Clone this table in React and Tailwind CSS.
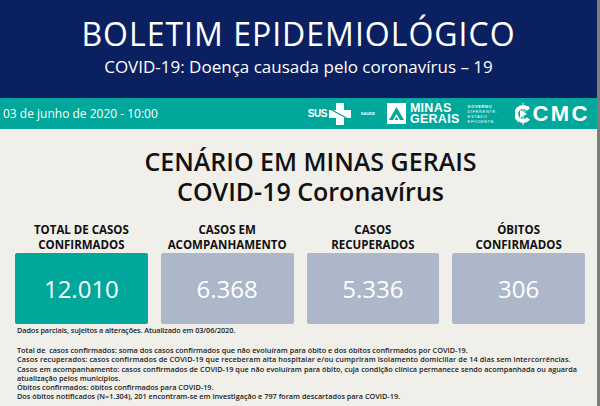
const stats = [
  { label: ["TOTAL DE CASOS", "CONFIRMADOS"], value: "12.010", color: "bg-[#00a79a]" },
  { label: ["CASOS EM", "ACOMPANHAMENTO"], value: "6.368", color: "bg-[#adb7ca]" },
  { label: ["CASOS", "RECUPERADOS"], value: "5.336", color: "bg-[#adb7ca]" },
  { label: ["ÓBITOS", "CONFIRMADOS"], value: "306", color: "bg-[#adb7ca]" },
];

function SusLogo() {
  return (
    <div className="flex items-center gap-[2px]">
      <span className="text-[10px] font-bold tracking-tighter text-white font-['Liberation_Sans',sans-serif]">SUS</span>
      <svg width="22" height="22" viewBox="0 0 22 22">
        <path d="M7 0h8v7h7v8h-7v7H7v-7H0V7h7z" fill="#fff" />
        <path d="M1 6l20 11" stroke="#00a79a" strokeWidth="1.4" />
      </svg>
    </div>
  );
}

function MinasLogo() {
  return (
    <div className="flex items-center">
      <span className="text-[4px] font-bold text-white ml-[10px] mr-[12px] font-['Liberation_Sans',sans-serif]">SAÚDE</span>
      <svg width="19" height="21" viewBox="0 0 19 21">
        <rect width="19" height="21" fill="#fff" />
        <path d="M2 17L9.5 4 17 17z" fill="#00a79a" />
        <path d="M6 17l3.5-6 3.5 6z" fill="#fff" />
        <path d="M7.5 17l2-3.2 2 3.2z" fill="#00a79a" />
      </svg>
      <div className="ml-[4px] flex flex-col leading-[11px] text-white font-bold text-[12.5px] font-['Liberation_Sans',sans-serif] tracking-[0.3px]">
        <span>MINAS</span>
        <span>GERAIS</span>
      </div>
      <div className="ml-[8px] flex flex-col text-[4px] leading-[5px] text-white tracking-[0.6px] font-['Liberation_Sans',sans-serif]">
        <span className="font-bold">GOVERNO</span>
        <span>DIFERENTE.</span>
        <span>ESTADO</span>
        <span>EFICIENTE.</span>
      </div>
    </div>
  );
}

function CmcLogo() {
  return (
    <div className="flex items-center">
      <svg width="16" height="24" viewBox="0 0 16 24">
        <path d="M8 1v22" stroke="#fff" strokeWidth="1" />
        <path d="M13.5 7.5A7 7 0 1 0 13.5 16.5" fill="none" stroke="#fff" strokeWidth="4" />
        <path d="M5 8l7 4-7 4z" fill="#fff" />
        <path d="M2 20L14 4" stroke="#fff" strokeWidth="0.8" />
      </svg>
      <span className="ml-[1px] text-[22px] leading-none font-bold text-white font-['Liberation_Sans',sans-serif] tracking-[2.5px]">CMC</span>
    </div>
  );
}

export default function App() {
  return (
    <div className="w-[600px] h-[406px] overflow-hidden flex flex-col bg-[#f0efea] font-['Open_Sans',sans-serif] border-r-[3px] border-[#7d7d7a]">
      <div className="shrink-0 h-[98px] bg-[#0b2060] flex flex-col items-center text-white">
        <h1 className="mt-[13px] text-[32px] leading-[42px] tracking-[1px]">BOLETIM EPIDEMIOLÓGICO</h1>
        <p className="mt-[1px] text-[17px] leading-[22px]">COVID-19: Doença causada pelo coronavírus – 19</p>
      </div>
      <div className="shrink-0 h-[31px] bg-[#00a79a] flex items-center text-white pl-[3px] pr-[7px]">
        <span className="text-[12px]">03 de junho de 2020 - 10:00</span>
        <div className="ml-auto flex items-center">
          <SusLogo />
          <MinasLogo />
          <div className="ml-[18px]">
            <CmcLogo />
          </div>
        </div>
      </div>
      <div className="shrink-0 flex flex-col items-center mt-[17px] pl-[24px] text-[#111] font-semibold">
        <h2 className="text-[25px] leading-[30px]">CENÁRIO EM MINAS GERAIS</h2>
        <h3 className="text-[25px] leading-[30px]">COVID-19 Coronavírus</h3>
      </div>
      <div className="shrink-0 grid grid-cols-4 gap-[13px] pl-[15px] pr-[12px] mt-[16px]">
        {stats.map((s) => (
          <div key={s.value} className="flex flex-col items-center">
            <div className="text-[11.5px] leading-[15px] font-bold text-[#111] text-center">
              {s.label[0]}
              <br />
              {s.label[1]}
            </div>
            <div className={`mt-[1px] w-full h-[71px] rounded-[2px] ${s.color} flex items-center justify-center text-white text-[24px]`}>
              {s.value}
            </div>
          </div>
        ))}
      </div>
      <div className="shrink-0 pl-[17px] pr-[20px] text-[7.3px] leading-[9.2px] font-semibold text-[#222]">
        <p className="mt-[2px] tracking-[-0.1px]">Dados parciais, sujeitos a alterações. Atualizado em 03/06/2020.</p>
        <p className="mt-[11px]">Total de&nbsp; casos confirmados: soma dos casos confirmados que não evoluíram para óbito e dos óbitos confirmados por COVID-19.</p>
        <p className="whitespace-nowrap tracking-[0.1px]">Casos recuperados: casos confirmados de COVID-19 que receberam alta hospitalar e/ou cumpriram isolamento domiciliar de 14 dias sem intercorrências.</p>
        <p className="text-justify [text-align-last:left]">Casos em acompanhamento: casos confirmados de COVID-19 que não evoluíram para óbito, cuja condição clínica permanece sendo acompanhada ou aguarda atualização pelos municípios.</p>
        <p>Óbitos confirmados: óbitos confirmados para COVID-19.</p>
        <p>Dos óbitos notificados (N=1.304), 201 encontram-se em investigação e 797 foram descartados para COVID-19.</p>
      </div>
    </div>
  );
}
